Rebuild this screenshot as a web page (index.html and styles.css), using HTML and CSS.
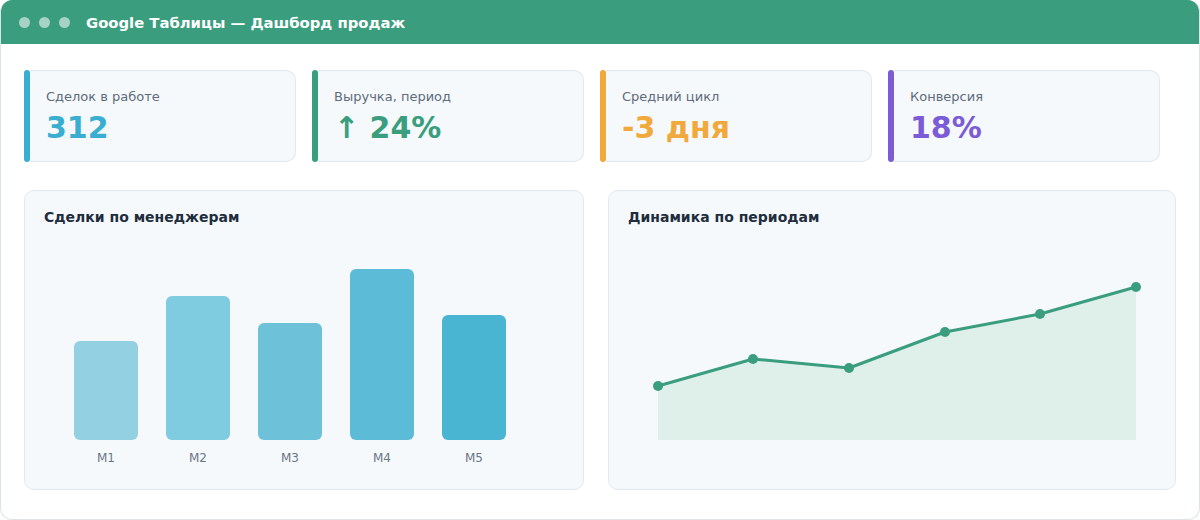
FILE: index.html
```html
<!DOCTYPE html>
<html lang="ru">
<head>
  <meta charset="UTF-8">
  <meta name="viewport" content="width=device-width, initial-scale=1.0">
  <title>Google Таблицы — Дашборд продаж</title>
  <link rel="stylesheet" href="styles.css">
</head>
<body>
  <div class="window">
    <header class="titlebar">
      <span class="dot"></span>
      <span class="dot"></span>
      <span class="dot"></span>
      <h1>Google Таблицы — Дашборд продаж</h1>
    </header>

    <main class="content">
      <section class="kpis">
        <div class="kpi">
          <div class="accent teal"></div>
          <div class="kpi-body">
            <p class="kpi-label">Сделок в работе</p>
            <p class="kpi-value teal-text">312</p>
          </div>
        </div>
        <div class="kpi">
          <div class="accent green"></div>
          <div class="kpi-body">
            <p class="kpi-label">Выручка, период</p>
            <p class="kpi-value green-text">↑ 24%</p>
          </div>
        </div>
        <div class="kpi">
          <div class="accent orange"></div>
          <div class="kpi-body">
            <p class="kpi-label">Средний цикл</p>
            <p class="kpi-value orange-text">-3 дня</p>
          </div>
        </div>
        <div class="kpi">
          <div class="accent purple"></div>
          <div class="kpi-body">
            <p class="kpi-label">Конверсия</p>
            <p class="kpi-value purple-text">18%</p>
          </div>
        </div>
      </section>

      <section class="charts">
        <div class="panel">
          <h2>Сделки по менеджерам</h2>
          <div class="bars">
            <div class="col"><div class="bar" style="height:99px;background:#92d0e2"></div><span>M1</span></div>
            <div class="col"><div class="bar" style="height:144px;background:#7fcbdf"></div><span>M2</span></div>
            <div class="col"><div class="bar" style="height:117px;background:#6dc2da"></div><span>M3</span></div>
            <div class="col"><div class="bar" style="height:171px;background:#5cbcd7"></div><span>M4</span></div>
            <div class="col"><div class="bar" style="height:125px;background:#4ab4d3"></div><span>M5</span></div>
          </div>
        </div>

        <div class="panel">
          <h2>Динамика по периодам</h2>
          <svg class="line-chart" width="528" height="236" viewBox="0 0 528 236">
            <polygon points="30,158 125,131 221,140 317,104 412,86 508,59 508,212 30,212" fill="#dff0eb"/>
            <polyline points="30,158 125,131 221,140 317,104 412,86 508,59" fill="none" stroke="#3a9e7e" stroke-width="3" stroke-linejoin="round"/>
            <g fill="#3a9e7e">
              <circle cx="30" cy="158" r="5"/>
              <circle cx="125" cy="131" r="5"/>
              <circle cx="221" cy="140" r="5"/>
              <circle cx="317" cy="104" r="5"/>
              <circle cx="412" cy="86" r="5"/>
              <circle cx="508" cy="59" r="5"/>
            </g>
          </svg>
        </div>
      </section>
    </main>
  </div>
</body>
</html>
```

FILE: styles.css
```css
body {
  margin: 0;
  font-family: 'DejaVu Sans', 'Noto Sans', sans-serif;
  background-color: #ffffff;
}

.window {
  width: 1200px;
  height: 520px;
  box-sizing: border-box;
  border: 1px solid #dde3ea;
  border-top: none;
  border-radius: 12px;
  overflow: hidden;
  background: white;
}

.titlebar {
  height: 44px;
  margin: 0 -1px;
  background-color: #3a9e7e;
  display: flex;
  align-items: center;
  gap: 9px;
  padding-left: 19px;
}

.titlebar .dot {
  width: 11px;
  height: 11px;
  border-radius: 50%;
  background: rgba(255, 255, 255, 0.55);
}

.titlebar h1 {
  margin: 0 0 0 7px;
  color: white;
  font-size: 14.8px;
  font-weight: bold;
}

.content {
  padding: 26px 23px 0;
}

.kpis {
  display: flex;
  gap: 16px;
}

.kpi {
  width: 272px;
  height: 92px;
  display: flex;
}

.accent {
  width: 6px;
  border-radius: 3px;
  flex-shrink: 0;
}

.teal { background: #3aaed0; }
.green { background: #3a9e7e; }
.orange { background: #f2a93b; }
.purple { background: #7b5bd6; }

.teal-text { color: #3aaed0; }
.green-text { color: #3a9e7e; }
.orange-text { color: #f2a93b; }
.purple-text { color: #7b5bd6; }

.kpi-body {
  flex: 1;
  background: #f5f9fc;
  border: 1px solid #e3e8ee;
  border-left: none;
  border-radius: 0 10px 10px 0;
  padding: 18px 16px 0;
}

.kpi-label {
  margin: 0;
  font-size: 13px;
  line-height: 16px;
  color: #5f6b7a;
}

.kpi-value {
  margin: 6px 0 0;
  font-size: 30px;
  line-height: 34px;
  font-weight: bold;
}

.charts {
  display: grid;
  grid-template-columns: 560px 568px;
  gap: 24px;
  margin-top: 28px;
}

.panel {
  height: 300px;
  box-sizing: border-box;
  background: #f5f9fc;
  border: 1px solid #e3e8ee;
  border-radius: 10px;
  padding: 17px 19px;
}

.panel h2 {
  margin: 0;
  font-size: 14px;
  line-height: 18px;
  color: #1f2d3d;
}

.bars {
  height: 240px;
  display: flex;
  align-items: flex-end;
  gap: 28px;
  padding-left: 30px;
}

.col {
  width: 64px;
  display: flex;
  flex-direction: column;
  align-items: center;
}

.bar {
  width: 64px;
  border-radius: 6px;
}

.col span {
  margin-top: 10px;
  font-size: 12px;
  line-height: 16px;
  color: #6b7685;
}

.line-chart {
  display: block;
  margin-top: 2px;
}
```
